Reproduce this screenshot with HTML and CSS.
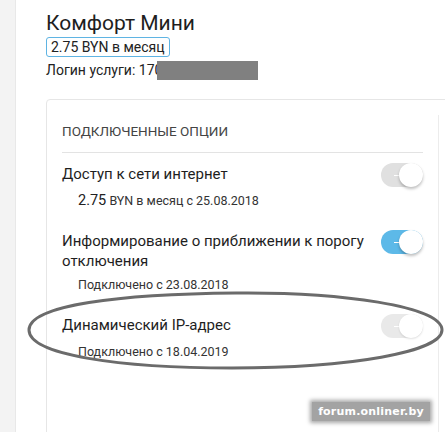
FILE: index.html
```html
<!DOCTYPE html>
<html lang="ru">
<head>
<meta charset="utf-8">
<link rel="stylesheet" href="styles.css">
</head>
<body>
<div class="page">
  <aside class="sidebar"></aside>
  <main class="main">
    <h1 class="title">Комфорт Мини</h1>
    <div class="price-badge">2.75 BYN в месяц</div>
    <div class="login">Логин услуги: 170<span class="redact"></span></div>

    <section class="card">
      <div class="card-inner">
        <h2 class="card-heading">Подключенные опции</h2>

        <div class="option">
          <div class="option-row">
            <div class="option-title">Доступ к сети интернет</div>
            <span class="toggle"><span class="knob"></span></span>
          </div>
          <div class="option-sub"><span class="amount">2.75</span> BYN в месяц с 25.08.2018</div>
        </div>

        <div class="option">
          <div class="option-row">
            <div class="option-title">Информирование о приближении к порогу отключения</div>
            <span class="toggle on"><span class="knob"></span></span>
          </div>
          <div class="option-sub">Подключено с 23.08.2018</div>
        </div>

        <div class="option">
          <div class="option-row">
            <div class="option-title">Динамический IP-адрес</div>
            <span class="toggle light"><span class="knob"></span></span>
          </div>
          <div class="option-sub">Подключено с 18.04.2019</div>
        </div>
      </div>
    </section>
  </main>

  <svg class="circle-mark" width="445" height="432" viewBox="0 0 445 432">
    <path d="M236 293 C 340 292, 442 306, 442 330 C 442 352, 350 368, 232 368 C 120 368, 29 355, 29 330 C 29 305, 120 294, 236 293 Z" fill="none" stroke="#6b6b6b" stroke-width="3"/>
  </svg>
  <div class="watermark">forum.onliner.by</div>
</div>
</body>
</html>
```

FILE: styles.css
```css
* { box-sizing: border-box; }
html, body { margin: 0; padding: 0; background: #fff; }
body {
  font-family: Roboto, "Liberation Sans", sans-serif;
  color: #222;
  width: 445px;
  height: 432px;
  overflow: hidden;
}
.page {
  position: relative;
  display: flex;
  height: 432px;
  overflow: hidden;
}
.sidebar {
  flex: 0 0 16px;
  background: #f3f3f3;
  border-right: 1px solid #e8e8e8;
}
.main {
  flex: 1;
  padding: 11px 0 0 30px;
  margin-right: -20px;
}
.title {
  margin: 0;
  font-size: 21px;
  font-weight: 400;
  line-height: 24px;
  color: #1e1e1e;
}
.price-badge {
  display: inline-block;
  margin-top: 2px;
  height: 20px;
  line-height: 18px;
  padding: 0 4px;
  border: 1px solid #5fb4e3;
  border-radius: 3px;
  font-size: 14px;
  color: #222;
}
.login {
  display: flex;
  align-items: center;
  margin-top: 4px;
  font-size: 14px;
  line-height: 19px;
  color: #222;
}
.redact {
  display: inline-block;
  width: 101px;
  height: 19px;
  margin-left: -5px;
  background: #808080;
}
.card {
  margin-top: 19px;
  border: 1px solid #e6e6e6;
  border-radius: 4px;
  padding: 15px 0 0 15px;
  height: 400px;
}
.card-inner {
  border-right: 1px solid #ececec;
  padding-right: 15px;
  margin-right: 25px;
  height: 100%;
}
.card-heading {
  margin: 0;
  padding: 6px 0 11px;
  font-size: 13.5px;
  font-weight: 400;
  line-height: 20px;
  text-transform: uppercase;
  color: #444;
  border-bottom: 1px solid #e3e3e3;
}
.option {
  padding: 11px 0 10px;
}
.option-row {
  display: flex;
  align-items: flex-start;
  justify-content: space-between;
  gap: 16px;
}
.option-title {
  font-size: 15px;
  line-height: 20px;
  color: #1e1e1e;
  max-width: 318px;
}
.option-sub {
  margin-top: 5px;
  padding-left: 16px;
  font-size: 12.5px;
  line-height: 18px;
  color: #333;
}
.amount {
  font-size: 14.5px;
  color: #222;
}
.toggle {
  position: relative;
  flex: 0 0 42px;
  width: 42px;
  height: 24px;
  margin-top: -1px;
  border-radius: 12px;
  background: #e0e0e0;
}
.toggle::before {
  content: "";
  position: absolute;
  left: 13px;
  top: 11.5px;
  width: 5px;
  height: 1px;
  background: #fff;
}
.toggle.on { background: #5db9e8; }
.toggle.light { background: #e9e9e9; }
.knob {
  position: absolute;
  right: 0;
  top: 0;
  width: 24px;
  height: 24px;
  border-radius: 50%;
  background: #fff;
  box-shadow: 0 2px 3px rgba(0,0,0,0.25);
}
.toggle.light .knob { box-shadow: 0 1px 2px rgba(0,0,0,0.12); }
.circle-mark {
  position: absolute;
  left: 0;
  top: 0;
  pointer-events: none;
}
.watermark {
  position: absolute;
  left: 312px;
  top: 402px;
  width: 118px;
  height: 19px;
  background: #a3a3a3;
  box-shadow: 0 0 4px 2px #a8a8a8;
  color: #fff;
  font-family: "DejaVu Sans", sans-serif;
  font-weight: 700;
  font-size: 11px;
  line-height: 19px;
  text-align: center;
  letter-spacing: 0.2px;
}
```
